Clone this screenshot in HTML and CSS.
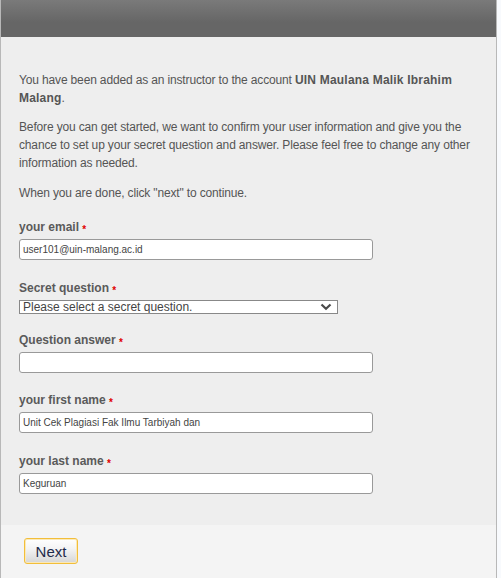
FILE: index.html
```html
<!DOCTYPE html>
<html>
<head>
<meta charset="utf-8">
<link rel="stylesheet" href="styles.css">
</head>
<body>
<div class="panel">
  <div class="header"></div>
  <div class="content">
    <p class="intro">You have been added as an instructor to the account <b>UIN Maulana Malik Ibrahim Malang</b>.</p>
    <p class="intro">Before you can get started, we want to confirm your user information and give you the chance to set up your secret question and answer. Please feel free to change any other information as needed.</p>
    <p class="intro last">When you are done, click "next" to continue.</p>

    <div class="field first">
      <label class="label">your email <span class="req">*</span></label>
      <input class="text" type="text" value="user101@uin-malang.ac.id">
    </div>
    <div class="field secret">
      <label class="label">Secret question <span class="req">*</span></label>
      <div class="select-wrap">
        <select class="select"><option>Please select a secret question.</option></select>
        <svg class="chev" width="12" height="8" viewBox="0 0 12 8"><path d="M1.5 1.5 L6 5.8 L10.5 1.5" fill="none" stroke="#4a4a4a" stroke-width="2.2"/></svg>
      </div>
    </div>
    <div class="field answer">
      <label class="label">Question answer <span class="req">*</span></label>
      <input class="text" type="text" value="">
    </div>
    <div class="field">
      <label class="label">your first name <span class="req">*</span></label>
      <input class="text" type="text" value="Unit Cek Plagiasi Fak Ilmu Tarbiyah dan">
    </div>
    <div class="field lastname">
      <label class="label">your last name <span class="req">*</span></label>
      <input class="text" type="text" value="Keguruan">
    </div>
  </div>
  <div class="footer">
    <button class="next">Next</button>
  </div>
</div>
</body>
</html>
```
FILE: styles.css
```css
html, body {
  margin: 0;
  padding: 0;
}
body {
  background: #f8fafd;
  font-family: "Liberation Sans", Arial, sans-serif;
  width: 501px;
  height: 578px;
  overflow: hidden;
}
.panel {
  width: 495px;
  border-left: 1px solid #b8b8b8;
  border-right: 1px solid #b8b8b8;
  background: #eeeeee;
  height: 578px;
}
.header {
  height: 37px;
  background: linear-gradient(#7a7a7a, #666666 60%, #666666);
}
.content {
  padding: 34px 12px 31px 18px;
}
.intro {
  margin: 0 0 11px 0;
  font-size: 12px;
  line-height: 18px;
  color: #555555;
  letter-spacing: -0.15px;
}
.intro.last {
  margin-top: 12px;
}
.intro b {
  font-weight: bold;
  letter-spacing: 0.2px;
}
.field {
  margin-top: 20px;
}
.field.first {
  margin-top: 18px;
}
.field.secret {
  margin-top: 21px;
}
.field.answer {
  margin-top: 19px;
}
.field.lastname {
  margin-top: 21px;
}
.label {
  display: block;
  font-size: 12px;
  font-weight: bold;
  line-height: 15px;
  color: #5a5a5a;
  margin-bottom: 4px;
}
.req {
  color: #e00000;
  font-size: 10px;
  position: relative;
  top: 2px;
}
.text {
  display: block;
  box-sizing: border-box;
  width: 354px;
  height: 21px;
  margin: 0;
  padding: 0 3px;
  border: 1px solid #999999;
  border-radius: 3px;
  background: #ffffff;
  font-family: "Liberation Sans", Arial, sans-serif;
  font-size: 10px;
  color: #444444;
  outline: none;
}
.select-wrap {
  position: relative;
  width: 319px;
}
.select {
  display: block;
  -webkit-appearance: none;
  appearance: none;
  box-sizing: border-box;
  width: 319px;
  height: 14px;
  margin: 0;
  padding: 0 3px;
  border: 1px solid #888888;
  border-radius: 0;
  background: #ffffff;
  font-family: "Liberation Sans", Arial, sans-serif;
  font-size: 12px;
  line-height: 12px;
  color: #444444;
}
.chev {
  position: absolute;
  right: 6px;
  top: 3px;
  pointer-events: none;
}
.footer {
  display: flex;
  align-items: flex-start;
  background: #f4f4f4;
  height: 60px;
  padding: 13px 0 0 23px;
  box-sizing: border-box;
}
.next {
  width: 54px;
  height: 26px;
  margin: 0;
  padding: 0;
  border: 1px solid #f2be3a;
  border-radius: 3px;
  background: linear-gradient(#ffffff, #f4f4f4 40%, #d6d6d6);
  box-shadow: inset 0 0 0 1px #fbe9b8;
  font-family: "Liberation Sans", Arial, sans-serif;
  font-size: 15px;
  color: #1e2a4a;
}
```
